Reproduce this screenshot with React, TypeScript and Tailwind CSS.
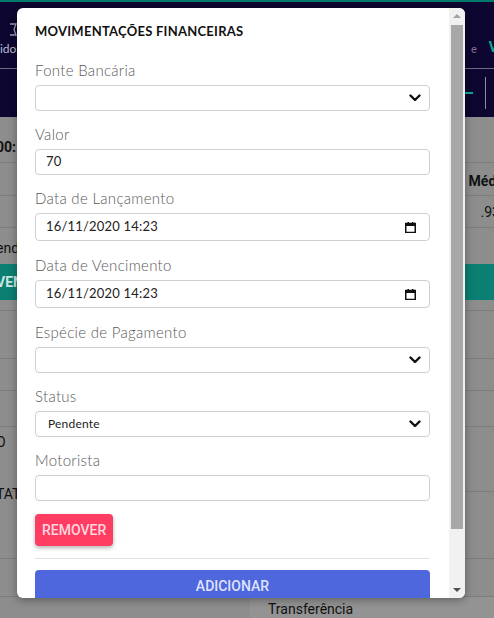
import React from "react";

const labelFont = { fontFamily: "Lato, 'Noto Sans', sans-serif" };

function Chevron() {
  return (
    <svg width="12" height="8" viewBox="0 0 12 8" className="shrink-0">
      <path d="M1.5 1.5 L6 6 L10.5 1.5" fill="none" stroke="#111" strokeWidth="2.4" strokeLinecap="round" strokeLinejoin="round" />
    </svg>
  );
}

function CalendarIcon() {
  return (
    <svg width="11" height="11" viewBox="0 0 11 11" className="shrink-0">
      <rect x="0.75" y="1.5" width="9.5" height="9" fill="none" stroke="#111" strokeWidth="1.5" />
      <rect x="0.75" y="1.5" width="9.5" height="2.5" fill="#111" />
      <rect x="2.5" y="0" width="1.5" height="2" fill="#111" />
      <rect x="7" y="0" width="1.5" height="2" fill="#111" />
    </svg>
  );
}

function Label({ children }: { children: React.ReactNode }) {
  return (
    <div className="text-[15px] leading-[22px] font-light tracking-[0.3px] text-[#5a5a5a] mb-[4px]" style={labelFont}>
      {children}
    </div>
  );
}

function Field({ label, children, tall = false }: { label: string; children: React.ReactNode; tall?: boolean }) {
  return (
    <div className={tall ? "mb-[13px]" : "mb-[12px]"}>
      <Label>{label}</Label>
      {children}
    </div>
  );
}

function SelectBox({ value = "" }: { value?: string }) {
  return (
    <div className="h-[26px] rounded-[4px] border border-[#cfcfcf] flex items-center justify-between pl-[12px] pr-[8px] bg-white">
      <span className="text-[12px] text-[#222] tracking-[0.2px]" style={labelFont}>{value}</span>
      <Chevron />
    </div>
  );
}

function TextBox({ value = "", date = false }: { value?: string; date?: boolean }) {
  return (
    <div
      className={`${date ? "h-[28px]" : "h-[26px]"} rounded-[4px] border border-[#cfcfcf] flex items-center justify-between pl-[10px] pr-[13px] bg-white`}
    >
      <span className="text-[13px] text-[#222] tracking-[0.2px]" style={labelFont}>{value}</span>
      {date && <CalendarIcon />}
    </div>
  );
}

function Row({
  h,
  left,
  right,
  line = true,
  leftClass = "",
  rightClass = "",
}: {
  h: number;
  left?: React.ReactNode;
  right?: React.ReactNode;
  line?: boolean;
  leftClass?: string;
  rightClass?: string;
}) {
  return (
    <div className={`flex justify-between ${line ? "border-b border-[#7d7d7d]" : ""}`} style={{ height: h }}>
      <div className={`text-[14px] leading-[20px] text-[#111] -ml-[4px] ${leftClass}`}>{left}</div>
      <div className={`text-[14px] leading-[20px] text-[#111] -mr-[6px] ${rightClass}`}>{right}</div>
    </div>
  );
}

export default function App() {
  return (
    <div
      className="relative w-[494px] h-[618px] overflow-hidden bg-[#8d8d8d]"
      style={{ fontFamily: "Roboto, 'Liberation Sans', sans-serif" }}
    >
      {/* page behind the dialog */}
      <div className="h-[2px] bg-[#00796b]" />
      <div className="h-[115px] bg-[#0c0630] flex flex-col">
        <div className="h-[67px] border-b border-[#6d6a85] flex items-end justify-between pb-[10px]">
          <div className="flex flex-col items-end -ml-[20px] text-[12px] text-[#bdbbd0]" style={labelFont}>
            <svg width="8" height="13" viewBox="0 0 8 13" className="mb-[4px] -mr-[1px]">
              <path d="M1 1 L7 1 L5 6.5 L7 12 L1 12" fill="none" stroke="#9e9cb6" strokeWidth="1.3" />
            </svg>
            <span>Pedido</span>
          </div>
          <div className="flex items-end gap-[12px] text-[14px] -mr-[4px]">
            <span className="text-[#8a6c8e] text-[11px]">e</span>
            <span className="text-[#0ea88f] font-bold">V</span>
          </div>
        </div>
        <div className="flex-1 flex items-center justify-end">
          <div className="w-[8px] h-[2px] bg-[#0ea88f] mr-[12px]" />
          <div className="w-px h-[32px] bg-[#8f8ca6] mr-[8px]" />
        </div>
      </div>
      <Row h={46} left={<span className="font-bold">00:</span>} leftClass="pt-[20px]" />
      <Row h={33} right={<span className="font-bold">Médi</span>} rightClass="pt-[8px]" />
      <Row h={32} right={<span>.93</span>} rightClass="pt-[6px]" />
      <Row h={36} left={<span>end</span>} line={false} leftClass="pt-[10px]" />
      <div className="h-[36px] bg-[#0b7f71] flex items-center">
        <span className="-ml-[4px] text-[14px] font-bold text-[#c8e6e1]">VEN</span>
      </div>
      <Row h={11} />
      <Row h={48} />
      <Row h={32} />
      <Row h={36} />
      <Row h={65} left={<span>O</span>} leftClass="pt-[5px]" />
      <Row h={35} left={<span>TAT</span>} line={false} leftClass="-mt-[8px]" />
      <Row h={32} />
      <Row h={38} />
      <div className="flex">
        <div className="w-[250px]" />
        <div className="flex-1 bg-[#939393] pl-[18px] pt-[2px] text-[14px] text-[#111]">Transferência</div>
      </div>

      {/* dialog */}
      <div className="absolute left-[17px] top-[8px] w-[448px] h-[590px] bg-white rounded-[6px] shadow-[0_2px_8px_rgba(0,0,0,0.35)] overflow-hidden flex">
        <div className="flex-1 pl-[18px] pr-[19px] pt-[13px]">
          <div className="text-[13px] leading-[20px] font-bold text-[#111] tracking-[0.25px]" style={labelFont}>
            MOVIMENTAÇÕES FINANCEIRAS
          </div>
          <div className="h-[18px]" />
          <Field label="Fonte Bancária">
            <SelectBox />
          </Field>
          <Field label="Valor">
            <TextBox value="70" />
          </Field>
          <Field label="Data de Lançamento" tall>
            <TextBox value="16/11/2020 14:23" date />
          </Field>
          <Field label="Data de Vencimento" tall>
            <TextBox value="16/11/2020 14:23" date />
          </Field>
          <Field label="Espécie de Pagamento">
            <SelectBox />
          </Field>
          <Field label="Status">
            <SelectBox value="Pendente" />
          </Field>
          <Field label="Motorista">
            <TextBox />
          </Field>
          <button className="mt-[1px] h-[32px] px-[7px] rounded-[4px] bg-[#ff3d63] text-[#ffd6de] text-[14px] font-medium shadow-[0_2px_4px_rgba(0,0,0,0.3)]">
            REMOVER
          </button>
          <div className="mt-[12px] border-t border-[#e2e2e2]" />
          <button className="mt-[11px] w-full h-[32px] rounded-t-[4px] bg-[#4f67dc] text-[#dfe4ff] text-[14px] font-medium">
            ADICIONAR
          </button>
        </div>
        <div className="w-[16px] bg-[#f1f1f1] flex flex-col items-center">
          <div className="h-[14px] flex items-center justify-center">
            <div className="w-0 h-0 border-l-[4px] border-r-[4px] border-b-[4px] border-l-transparent border-r-transparent border-b-[#a3a3a3] mt-[2px]" />
          </div>
          <div className="w-[12px] h-[504px] bg-[#a8a8a8] mt-[3px]" />
          <div className="flex-1" />
          <div className="h-[16px] flex items-center justify-center">
            <div className="w-0 h-0 border-l-[4px] border-r-[4px] border-t-[4px] border-l-transparent border-r-transparent border-t-[#505050]" />
          </div>
        </div>
      </div>
    </div>
  );
}
